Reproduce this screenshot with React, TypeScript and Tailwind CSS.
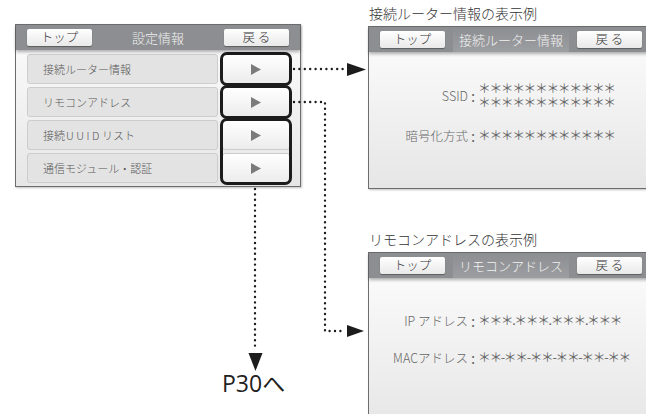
const FONT = "font-['Noto_Sans_CJK_JP','Noto_Sans',sans-serif] font-light";

const HeaderButton = ({ label }: { label: string }) => (
  <div className="w-[65px] h-[17px] rounded-[2px] bg-linear-to-b from-white to-[#e9e9e9] shadow-[0_1px_1px_rgba(0,0,0,0.35)] flex items-center justify-center text-[12.5px] leading-none text-[#333] whitespace-pre">
    {label}
  </div>
);

const Panel = ({
  title,
  band,
  children,
  className,
}: {
  title: string;
  band?: boolean;
  children: React.ReactNode;
  className?: string;
}) => (
  <div
    className={
      "w-[286px] shrink-0 border border-[#6d6d6d] flex flex-col bg-linear-to-b from-[#fdfdfd] to-[#e6e6e6] shadow-[1px_1px_2px_rgba(0,0,0,0.25)] " +
      (className ?? "")
    }
  >
    <div className="relative z-10 h-[25px] bg-[#8c8e91] flex items-center justify-between px-[11px] shadow-[0_2px_3px_rgba(0,0,0,0.3)]">
      <HeaderButton label="トップ" />
      <span
        className={
          "h-full flex items-center text-[13px] text-[#f2f2f2] " +
          (band ? "px-[6px] bg-linear-to-b from-[#8c8e91] to-[#9c9ea1]" : "")
        }
      >
        {title}
      </span>
      <HeaderButton label="戻 る" />
    </div>
    {children}
  </div>
);

const Arrow = () => (
  <div className="w-[68px] h-[30px] rounded-[3px] border border-[#cbcbcb] bg-linear-to-b from-white to-[#ececec] flex items-center justify-center">
    <svg width="10" height="11" viewBox="0 0 10 11">
      <polygon points="0,0 10,5.5 0,11" fill="#7b7b7b" />
    </svg>
  </div>
);

const Row = ({ children }: { children: React.ReactNode }) => (
  <div className="h-[30px] rounded-[3px] border border-[#cdcdcd] bg-[#e3e3e3] flex items-center pl-[15px] text-[11px] text-[#575757]">
    {children}
  </div>
);

const Field = ({ label, lines }: { label: string; lines: string[] }) => (
  <div className="flex items-center">
    <div className="w-[99px] text-right text-[12.5px] text-[#666] leading-[13px] whitespace-pre">{label}</div>
    <div className="w-[10px] text-center text-[15px] font-normal text-[#666] leading-[13px]">:</div>
    <div className="flex flex-col text-[12.8px] tracking-[-1.4px] font-normal text-[#6a6a6a] whitespace-nowrap">
      {lines.map((l, i) => (
        <div key={i} className="h-[14px] leading-[14px]">
          {l}
        </div>
      ))}
    </div>
  </div>
);

const Dotted = ({ d }: { d: string }) => (
  <path d={d} fill="none" stroke="#1c1c1c" strokeWidth={2.4} strokeLinecap="round" strokeDasharray="0 5.4" />
);

export default function App() {
  const stars = "＊＊＊＊＊＊＊＊＊＊＊＊";
  return (
    <div className={"relative w-[646px] h-[414px] overflow-hidden bg-white flex " + FONT}>
      {/* left: settings screen */}
      <div className="flex flex-col pl-[15px] pt-[24px] w-[301px] shrink-0">
        <Panel title="設定情報">
          <div className="flex gap-[4px] pl-[11px] pr-[10px] pt-[4px] pb-[3px]">
            <div className="flex-1 flex flex-col gap-[3px]">
              <Row>接続ルーター情報</Row>
              <Row>リモコンアドレス</Row>
              <Row>
                接続<span className="tracking-[2.5px] pl-[1px]">UUID</span>リスト
              </Row>
              <Row>通信モジュール・認証</Row>
            </div>
            <div className="flex flex-col gap-[3px]">
              <div className="rounded-[5px] outline-3 outline-[#1c1c1c] -outline-offset-1">
                <Arrow />
              </div>
              <div className="rounded-[5px] outline-3 outline-[#1c1c1c] -outline-offset-1">
                <Arrow />
              </div>
              <div className="rounded-[5px] outline-3 outline-[#1c1c1c] -outline-offset-1 flex flex-col gap-[3px]">
                <Arrow />
                <Arrow />
              </div>
            </div>
          </div>
        </Panel>
        <div className="mt-[185px] ml-[207px] text-[23px] leading-none text-[#222] font-normal font-['Open_Sans','Noto_Sans_CJK_JP',sans-serif]">
          P30へ
        </div>
      </div>

      {/* right: examples */}
      <div className="ml-[67px] flex flex-col pt-[4px]">
        <div className="text-[14px] leading-[18px] text-[#333] pl-[1px]">接続ルーター情報の表示例</div>
        <Panel title="接続ルーター情報" band className="mt-[4px] h-[163px]">
          <div className="flex flex-col gap-[19px] pt-[29px]">
            <Field label="SSID" lines={[stars, stars]} />
            <Field label="暗号化方式" lines={[stars]} />
          </div>
        </Panel>
        <div className="mt-[41px] text-[14px] leading-[18px] text-[#333] pl-[1px]">リモコンアドレスの表示例</div>
        <Panel title="リモコンアドレス" band className="mt-[4px] h-[180px]">
          <div className="flex flex-col gap-[23px] pt-[35px]">
            <Field label="IP アドレス" lines={["＊＊＊.＊＊＊.＊＊＊.＊＊＊"]} />
            <Field label="MACアドレス" lines={["＊＊-＊＊-＊＊-＊＊-＊＊-＊＊"]} />
          </div>
        </Panel>
      </div>

      {/* connectors */}
      <svg className="absolute inset-0 pointer-events-none" width="646" height="414" viewBox="0 0 646 414">
        <Dotted d="M294 69 H344" />
        <polygon points="347,63 366,69.5 347,76" fill="#1c1c1c" />
        <Dotted d="M294 102 H325 V331 H343" />
        <polygon points="347,325 364,331 347,337" fill="#1c1c1c" />
        <Dotted d="M255 189 V350" />
        <polygon points="248.5,353 262.5,353 255.5,371" fill="#1c1c1c" />
      </svg>
    </div>
  );
}
